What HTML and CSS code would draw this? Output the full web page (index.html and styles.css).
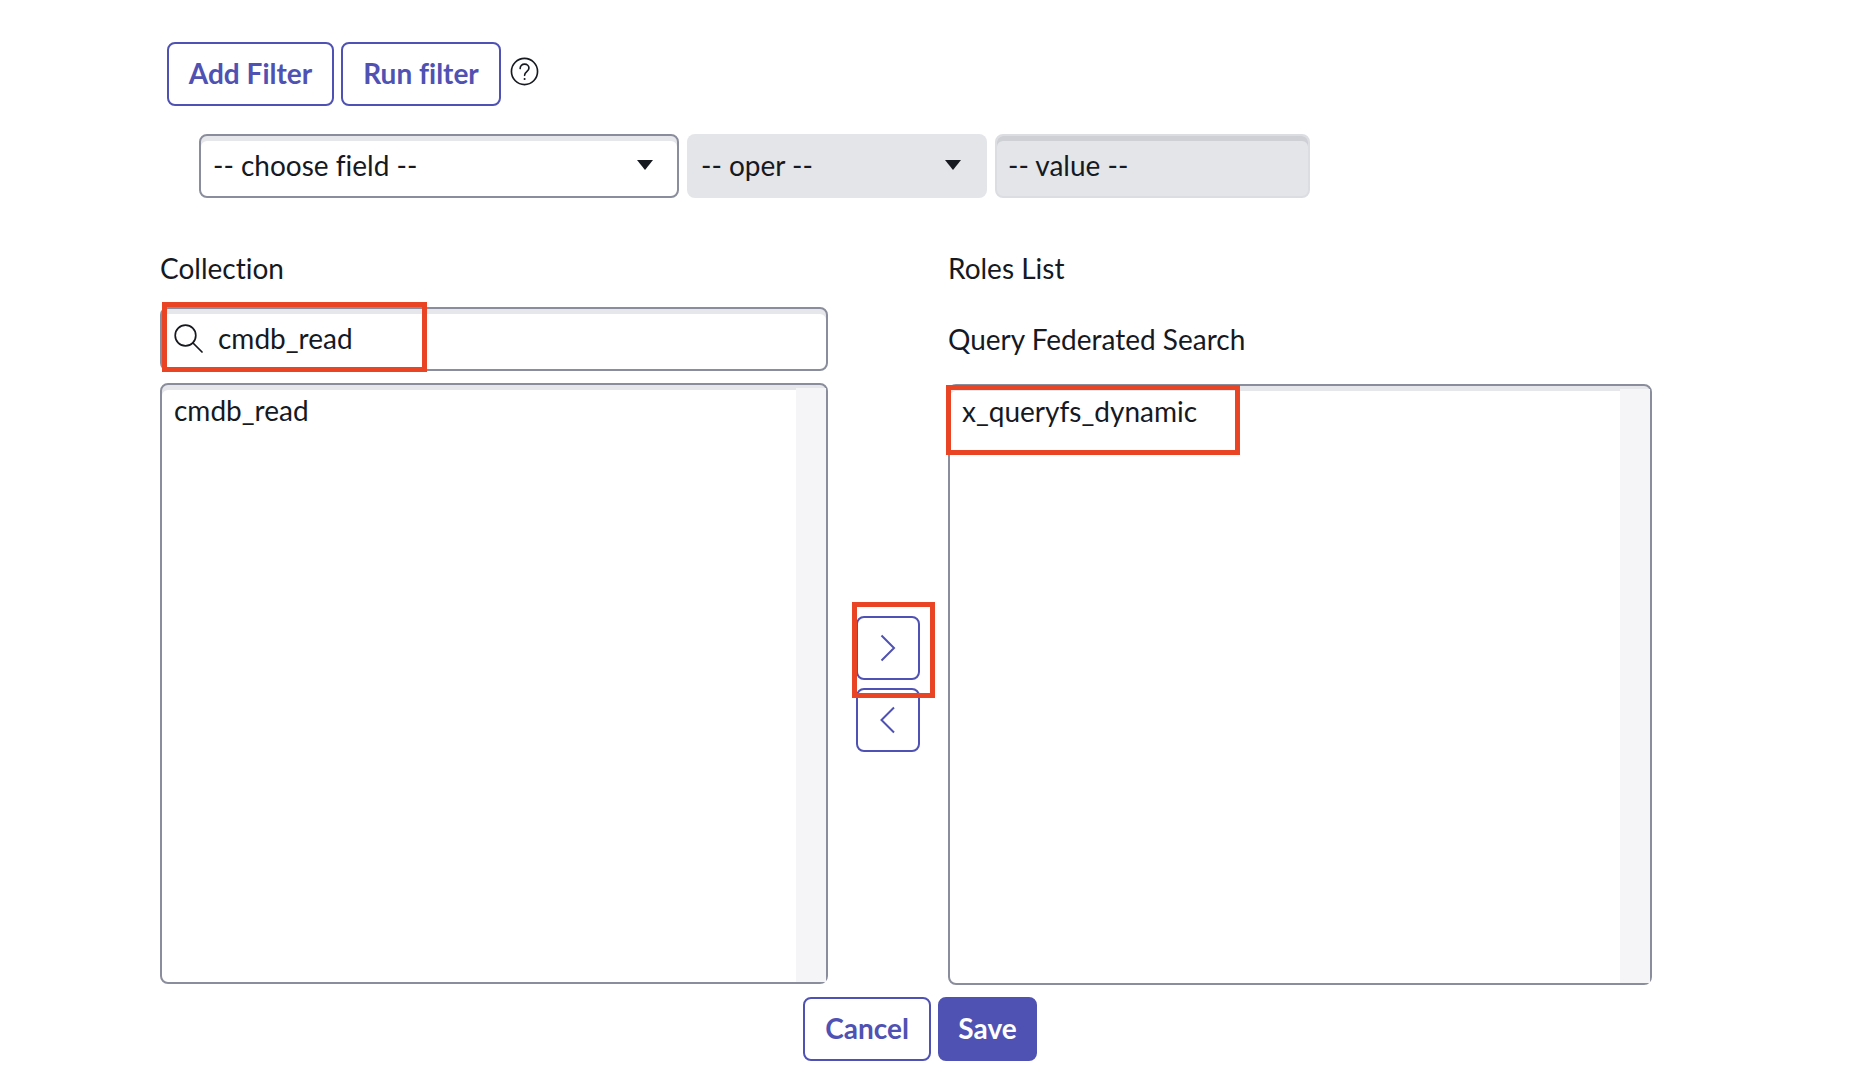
FILE: index.html
```html
<!DOCTYPE html>
<html lang="en">
<head>
<meta charset="utf-8">
<title>Query Federated Search roles</title>
<link rel="stylesheet" href="styles.css">
</head>
<body>
<main class="page">
  <div class="toolbar">
    <button class="btn btn-add">Add Filter</button>
    <button class="btn btn-run">Run filter</button>
    <svg class="help" width="29" height="29" viewBox="0 0 28 28" fill="none" stroke="#16191f" stroke-width="1.6">
      <circle cx="14" cy="14" r="12.6"/>
      <path d="M9.8 11.2c0-2.6 1.9-4.3 4.3-4.3s4.2 1.6 4.2 3.8c0 3.6-4.2 3.4-4.2 7" stroke-linecap="round"/>
      <circle cx="14.1" cy="21.3" r="1" fill="#16191f" stroke="none"/>
    </svg>
  </div>
  <div class="filters">
    <div class="field field-choose"><span>-- choose field --</span><i class="caret"></i></div>
    <div class="field field-oper"><span>-- oper --</span><i class="caret"></i></div>
    <div class="field field-value"><span>-- value --</span></div>
  </div>
  <div class="slush">
    <div class="head">
      <div class="label">Collection</div>
      <div class="search">
        <svg class="search-icon" width="29" height="29" viewBox="0 0 29 29" fill="none" stroke="#16191f" stroke-width="1.7">
          <circle cx="11.5" cy="11.5" r="10.3"/>
          <path d="M19 19l9 9" stroke-linecap="round"/>
        </svg>
        <span>cmdb_read</span>
      </div>
    </div>
    <div></div>
    <div class="head">
      <div class="label">Roles List</div>
      <div class="label label-second">Query Federated Search</div>
    </div>
    <div class="list list-left"><div class="option">cmdb_read</div></div>
    <div class="mover">
      <button class="arrow">
        <svg width="16" height="28" viewBox="0 0 16 28" fill="none" stroke="#4f52b2" stroke-width="2"><path d="M1.5 1.5L14 14 1.5 26.5"/></svg>
      </button>
      <button class="arrow">
        <svg width="16" height="28" viewBox="0 0 16 28" fill="none" stroke="#4f52b2" stroke-width="2"><path d="M14 1.5L1.5 14 14 26.5"/></svg>
      </button>
    </div>
    <div class="list list-right"><div class="option">x_queryfs_dynamic</div></div>
  </div>
  <div class="footer">
    <button class="btn btn-cancel">Cancel</button>
    <button class="btn btn-save">Save</button>
  </div>
  <div class="mark mark-search"></div>
  <div class="mark mark-role"></div>
  <div class="mark mark-arrow"></div>
</main>
</body>
</html>
```
FILE: styles.css
```css
* { box-sizing: border-box; }
html, body { margin: 0; background: #fff; }
body { font-family: Lato, "Noto Sans", sans-serif; font-size: 28px; color: #16191f; font-variant-ligatures: none; }
.page { position: relative; width: 1868px; height: 1084px; padding-top: 42px; overflow: hidden; }

.toolbar { display: flex; align-items: center; padding-left: 167px; height: 64px; }
.btn {
  font: 700 28px Lato, "Noto Sans", sans-serif;
  font-variant-ligatures: none;
  height: 64px; padding: 0 0 2px; border: 2px solid #4f52b2; border-radius: 8px;
  background: #fff; color: #4f52b2;
}
.btn-add { width: 167px; }
.btn-run { width: 160px; margin-left: 7px; }
.help { margin-left: 9px; margin-top: -5px; }

.filters { display: flex; margin-top: 28px; padding-left: 199px; height: 64px; }
.field { display: flex; align-items: center; justify-content: space-between; border-radius: 8px; padding-bottom: 2px; }
.field-choose { width: 480px; padding-left: 12px; padding-right: 24px; border: 2px solid #8a8d9b; box-shadow: inset 0 5px 0 #e6e7eb; }
.field-oper { width: 300px; margin-left: 8px; padding-left: 14px; padding-right: 26px; background: #e4e5e9; }
.field-value { width: 315px; margin-left: 8px; padding-left: 11px; padding-right: 11px; background: #e4e5e9; border: 2px solid #dcdde2; box-shadow: inset 0 5px 0 #cfd0d6; }
.caret { width: 0; height: 0; border-left: 8px solid transparent; border-right: 8px solid transparent; border-top: 10px solid #16191f; }

.slush { display: grid; grid-template-columns: 668px 120px 704px; grid-template-rows: 134px 601px; margin-top: 51px; margin-left: 160px; }
.head { display: flex; flex-direction: column; }
.label { height: 40px; line-height: 39px; }
.label-second { margin-top: 31px; }
.search { display: flex; align-items: center; height: 64px; margin-top: 18px; padding-left: 12px; padding-bottom: 2px; border: 2px solid #8a8d9b; border-radius: 8px; box-shadow: inset 0 5px 0 #e6e7eb; }
.search-icon { margin-right: 15px; }

.list { position: relative; border: 2px solid #8a8d9b; border-radius: 8px; background: #fff; box-shadow: inset 0 5px 0 #e6e7eb; }
.list::after { content: ""; position: absolute; top: 3px; right: 0; bottom: 0; width: 30px; background: #f5f5f8; }
.list-right { margin-top: 1px; margin-bottom: -1px; }
.option { padding: 5px 12px; line-height: 40px; }

.mover { display: flex; flex-direction: column; justify-content: center; align-items: center; gap: 8px; padding-top: 1px; }
.arrow { display: flex; align-items: center; justify-content: center; width: 64px; height: 64px; padding: 0; background: #fff; border: 2px solid #4f52b2; border-radius: 8px; }

.footer { display: flex; gap: 7px; margin-top: 13px; padding-left: 803px; }
.btn-cancel { width: 128px; }
.btn-save { width: 99px; background: #4f52b2; color: #fff; }

.mark { position: absolute; border: 5px solid #e94423; }
.mark-search { left: 162px; top: 302px; width: 265px; height: 70px; }
.mark-role { left: 946px; top: 385px; width: 294px; height: 70px; }
.mark-arrow { left: 852px; top: 602px; width: 83px; height: 96px; }
```
